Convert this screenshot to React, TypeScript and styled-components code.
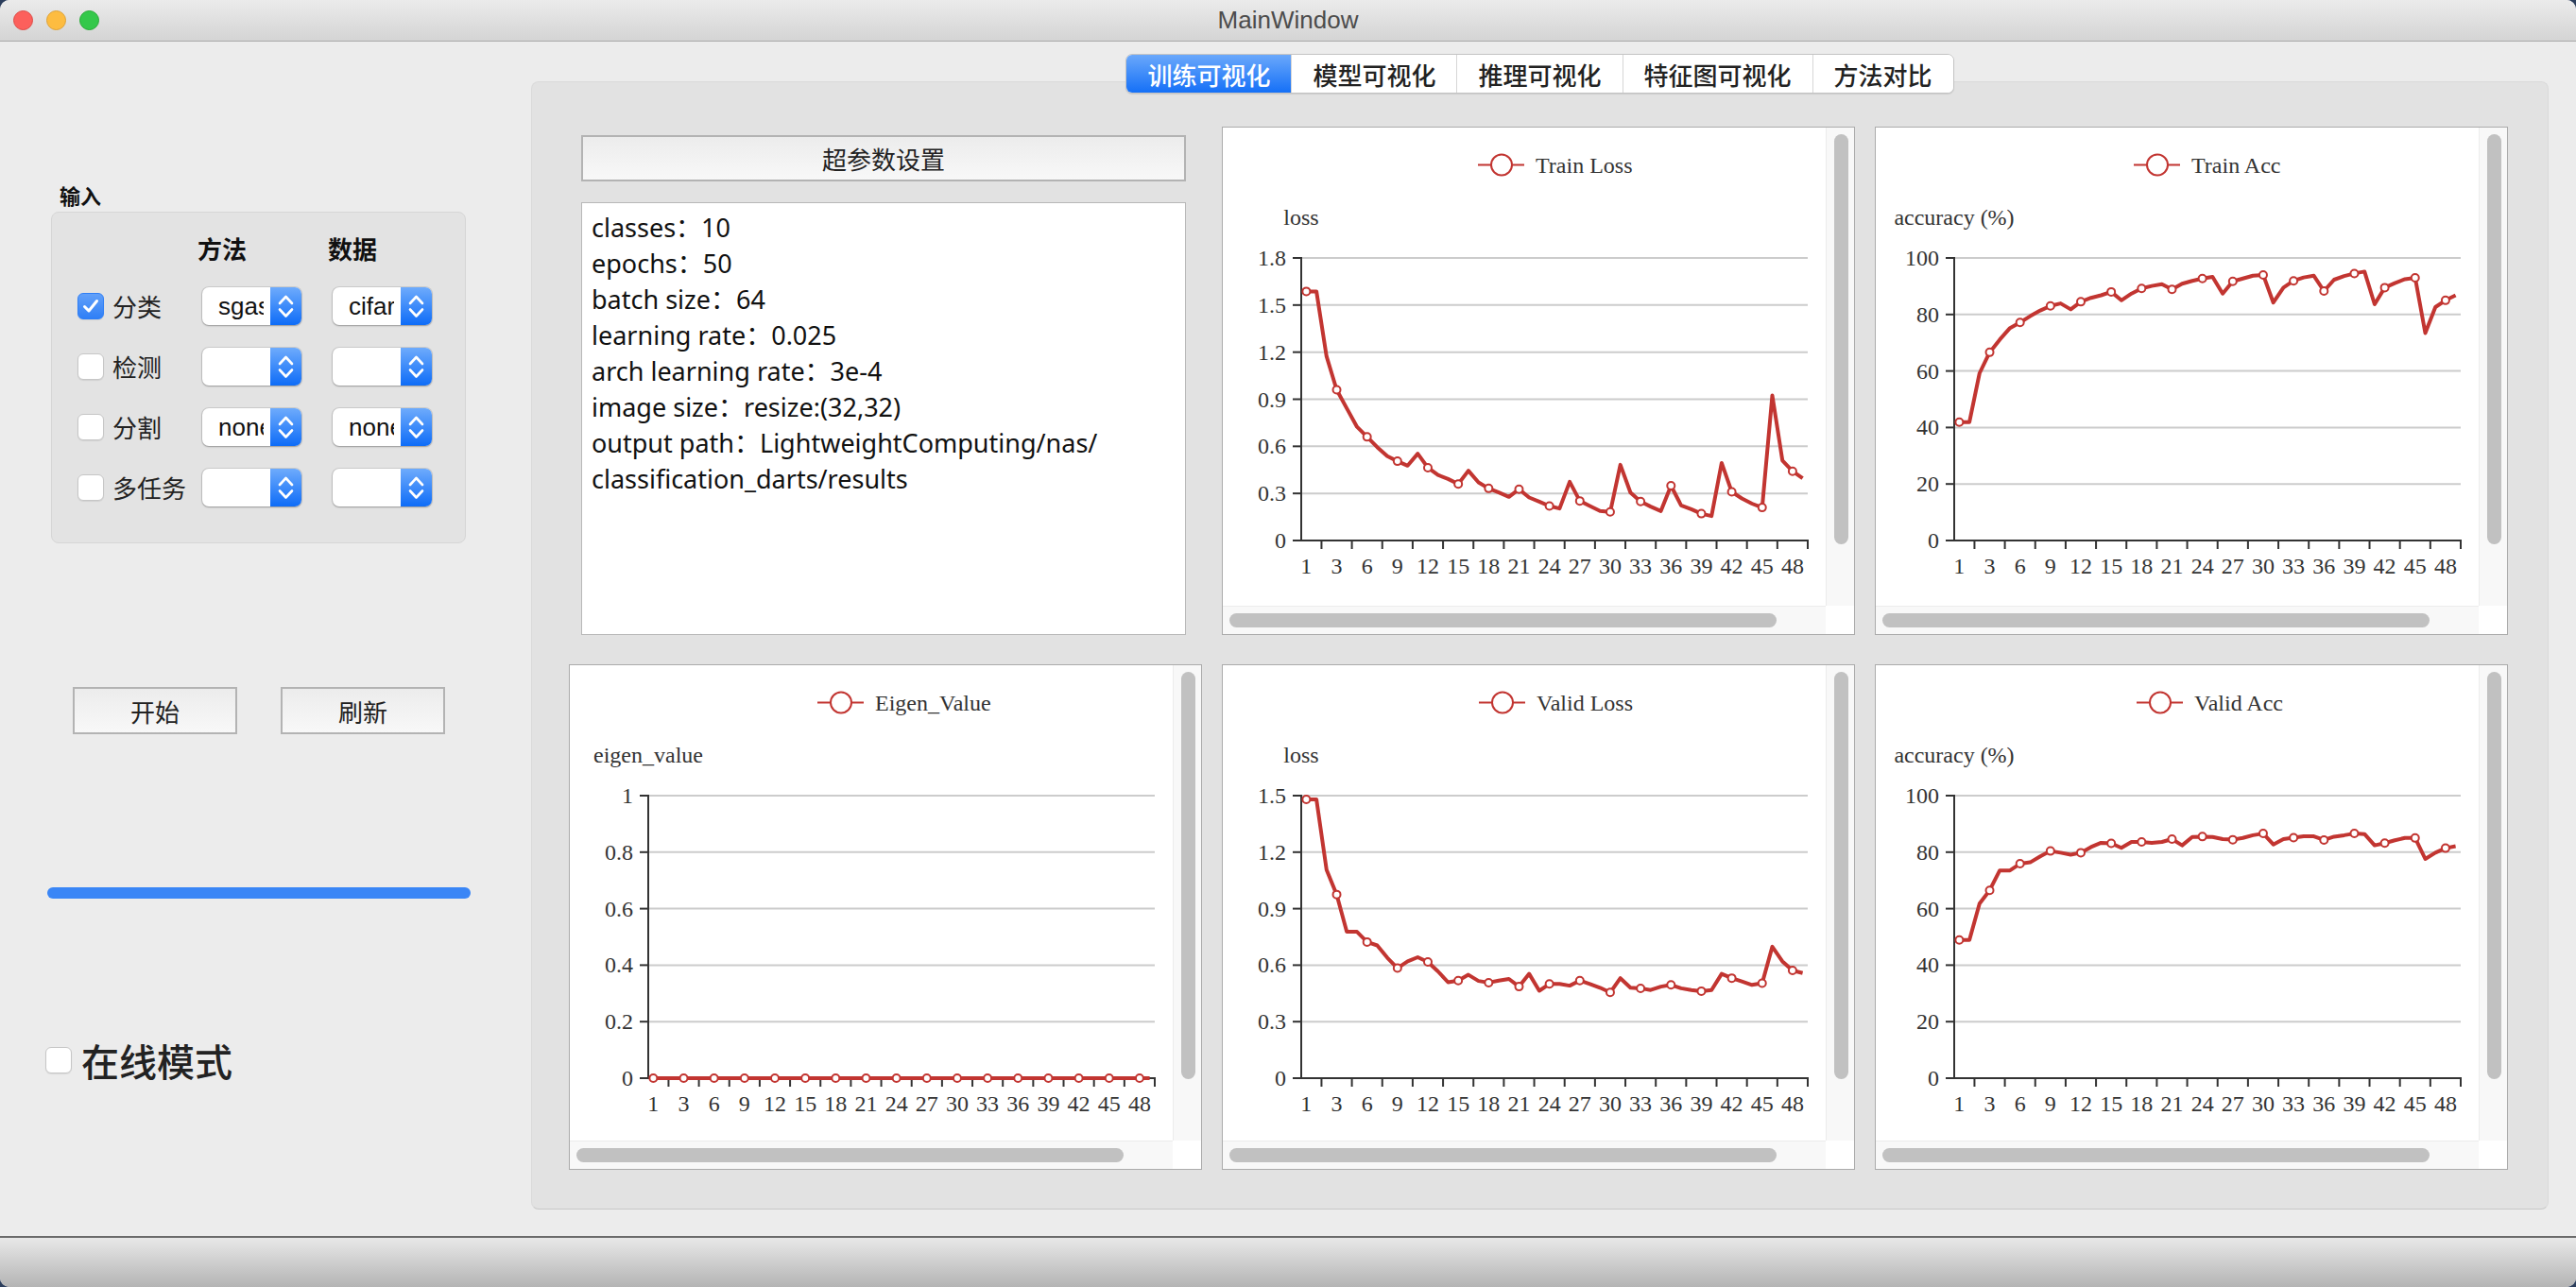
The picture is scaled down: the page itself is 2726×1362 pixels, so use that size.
import React from "react";
import styled, { createGlobalStyle } from "styled-components";

const CJK = `"Noto Sans CJK SC", "Noto Sans", sans-serif`;
const RED = "#c23531";

const GlobalStyle = createGlobalStyle`
  html, body { margin: 0; padding: 0; background: #2c3e5c; }
  body { width: 2726px; height: 1362px; overflow: hidden; font-family: ${CJK}; }
  #root { width: 2726px; height: 1362px; }
`;

const Window = styled.div`
  width: 2726px;
  height: 1362px;
  display: flex;
  flex-direction: column;
  background: #ececec;
  border-radius: 10px;
  overflow: hidden;
`;

const TitleBar = styled.div`
  height: 43px;
  flex: none;
  display: grid;
  grid-template-columns: 1fr auto 1fr;
  align-items: center;
  background: linear-gradient(#ebebeb, #d4d4d4);
  border-bottom: 1px solid #a9a9a9;
`;

const Lights = styled.div`
  display: flex;
  gap: 14px;
  padding-left: 14px;
`;

const Light = styled.span<{ $c: string; $b: string }>`
  width: 21px;
  height: 21px;
  border-radius: 50%;
  box-sizing: border-box;
  background: ${(p) => p.$c};
  border: 1px solid ${(p) => p.$b};
`;

const Title = styled.div`
  font: 26px "Liberation Sans", sans-serif;
  color: #4c4c4c;
`;

const Content = styled.div`
  flex: 1;
  display: flex;
  min-height: 0;
`;

const Sidebar = styled.div`
  width: 562px;
  flex: none;
  display: flex;
  flex-direction: column;
  align-items: flex-start;
`;

const InputLabel = styled.div`
  margin: 149px 0 5px 63px;
  font: 700 22px/26px ${CJK};
  color: #111;
`;

const GroupBox = styled.div`
  margin-left: 54px;
  width: 439px;
  height: 351px;
  box-sizing: border-box;
  background: #e3e3e3;
  border: 1px solid #d6d6d6;
  border-radius: 8px;
  padding: 21px 0 0 27px;
  display: grid;
  grid-template-columns: 132px 138px 105px;
  grid-template-rows: 34px repeat(4, 40px);
  row-gap: 24px;
  align-items: center;
`;

const ColHeader = styled.div<{ $col: number }>`
  grid-column: ${(p) => p.$col};
  margin-left: -5px;
  font: 700 26px/34px ${CJK};
  color: #111;
`;

const CheckRow = styled.label`
  display: flex;
  align-items: center;
  gap: 9px;
  font: 26px/40px ${CJK};
  color: #222;
`;

const CheckBox = styled.span<{ $checked?: boolean }>`
  width: 28px;
  height: 28px;
  box-sizing: border-box;
  border-radius: 6px;
  flex: none;
  display: flex;
  align-items: center;
  justify-content: center;
  background: ${(p) => (p.$checked ? "linear-gradient(#62a0f9, #2f7ff6)" : "#fff")};
  border: 1px solid ${(p) => (p.$checked ? "#2f7ff6" : "#c6c6c6")};
  box-shadow: 0 1px 1px rgba(0, 0, 0, 0.08);
`;

const Combo = styled.div`
  width: 105px;
  height: 40px;
  display: flex;
  border-radius: 7px;
  overflow: hidden;
  background: #fff;
  box-shadow: 0 0 0 1px rgba(0, 0, 0, 0.1), 0 1px 2px rgba(0, 0, 0, 0.25);
`;

const ComboText = styled.div`
  width: 72px;
  box-sizing: border-box;
  padding-left: 17px;
  display: flex;
  align-items: center;
`;

const ComboClip = styled.span`
  width: 48px;
  overflow: hidden;
  white-space: nowrap;
  font: 26px "Liberation Sans", sans-serif;
  color: #111;
`;

const ComboArrow = styled.div`
  width: 33px;
  background: linear-gradient(#6eabfc, #0e6cf7);
  display: flex;
`;

const ButtonRow = styled.div`
  margin: 152px 0 0 77px;
  display: flex;
  gap: 46px;
`;

const PushButton = styled.button<{ $wide?: boolean }>`
  width: ${(p) => (p.$wide ? "100%" : "174px")};
  height: ${(p) => (p.$wide ? "49px" : "50px")};
  flex: none;
  box-sizing: border-box;
  border: 2px solid #b3b3b3;
  background: linear-gradient(#ececec, #f8f8f8);
  font: 26px ${CJK};
  color: #222;
  padding: 0;
`;

const Progress = styled.div`
  margin: 162px 0 0 50px;
  width: 448px;
  height: 12px;
  border-radius: 6px;
  background: #3a86f6;
`;

const OnlineRow = styled.label`
  margin: 149px 0 0 48px;
  display: flex;
  align-items: center;
  gap: 10px;
  font: 500 40px/44px ${CJK};
  color: #222;
`;

const Main = styled.div`
  flex: 1;
  padding: 13px 29px 28px 0;
  display: flex;
  flex-direction: column;
  align-items: center;
`;

const TabBar = styled.div`
  display: flex;
  height: 40px;
  flex: none;
  margin-bottom: -13px;
  position: relative;
  z-index: 1;
  background: #fff;
  border: 1px solid #c4c4c4;
  border-radius: 7px;
  overflow: hidden;
  box-shadow: 0 1px 1px rgba(0, 0, 0, 0.1);
`;

const Tab = styled.div<{ $active?: boolean }>`
  padding: 0 22px;
  display: flex;
  align-items: center;
  font: 500 26px ${CJK};
  color: ${(p) => (p.$active ? "#fff" : "#222")};
  background: ${(p) => (p.$active ? "linear-gradient(#6aa8fb, #1570f7)" : "#fff")};
  & + & {
    border-left: 1px solid #d6d6d6;
  }
`;

const Pane = styled.div`
  align-self: stretch;
  flex: 1;
  min-height: 0;
  background: #e2e2e2;
  border: 1px solid #dadada;
  border-bottom-color: #c8c8c8;
  border-radius: 8px;
  padding: 47px 42px 43px 39px;
  display: grid;
  grid-template-columns: repeat(3, 1fr);
  grid-template-rows: 538px 535px;
  column-gap: 21px;
  row-gap: 31px;
`;

const ParamCell = styled.div`
  padding: 9px 17px 0 13px;
  display: flex;
  flex-direction: column;
  gap: 22px;
  min-width: 0;
`;

const ParamBox = styled.div`
  flex: 1;
  background: #fff;
  border: 1px solid #b8b8b8;
  padding: 7px 10px;
  font: 27px/38px "Noto Sans", ${CJK};
  color: #111;
  white-space: pre;
`;

const ChartFrame = styled.div`
  min-width: 0;
  border: 1px solid #ababab;
  background: #fff;
  display: grid;
  grid-template-columns: 1fr 30px;
  grid-template-rows: 1fr 30px;
  overflow: hidden;
`;

const Viewport = styled.div`
  overflow: hidden;
  min-width: 0;
  min-height: 0;
`;

const VTrack = styled.div`
  background: #f8f8f8;
  border-left: 1px solid #ececec;
  padding: 7px 6px 65px 8px;
  display: flex;
`;

const HTrack = styled.div`
  background: #f8f8f8;
  border-top: 1px solid #ececec;
  padding: 7px 52px 7px 7px;
  display: flex;
`;

const Thumb = styled.div`
  flex: 1;
  background: #c1c1c1;
  border-radius: 8px;
`;

const Corner = styled.div`
  background: #fff;
`;

const BottomBar = styled.div`
  height: 52px;
  flex: none;
  border-top: 2px solid #6b6b6b;
  background: linear-gradient(#e8e8e8, #b4b4b4);
`;

const AX = 83;
const GR = 619;
const GT = 138;
const GB = 437;
const XLABELS = ["1", "3", "6", "9", "12", "15", "18", "21", "24", "27", "30", "33", "36", "39", "42", "45", "48"];

type ChartProps = {
  legend: string;
  legendX: number;
  yName: string;
  yMax: number;
  yStep: number;
  data: number[];
};

function LineChart({ legend, legendX, yName, yMax, yStep, data }: ChartProps) {
  const n = 50;
  const band = (GR - AX) / n;
  const px = (i: number) => AX + (i + 0.5) * band;
  const py = (v: number) => GB - (v / yMax) * (GB - GT);
  const count = Math.round(yMax / yStep);
  const ys = Array.from({ length: count + 1 }, (_, k) => k * yStep);
  const pts = data.map((v, i) => `${px(i).toFixed(1)},${py(v).toFixed(1)}`).join(" ");
  const text = { fontFamily: '"Liberation Serif", serif', fontSize: 24, fill: "#333" };
  return (
    <ChartFrame>
      <Viewport>
        <svg width={704} height={506} style={{ display: "block" }}>
          <line x1={legendX} y1={39.5} x2={legendX + 49} y2={39.5} stroke={RED} strokeWidth={2} />
          <circle cx={legendX + 25} cy={39.5} r={11} fill="#fff" stroke={RED} strokeWidth={2} />
          <text x={legendX + 61} y={48} {...text}>{legend}</text>
          <text x={AX} y={103} textAnchor="middle" {...text}>{yName}</text>
          {ys.map((v) => (
            <g key={v}>
              {v > 0 && <line x1={AX} y1={py(v)} x2={GR} y2={py(v)} stroke="#ccc" strokeWidth={2} />}
              <line x1={AX - 9} y1={py(v)} x2={AX} y2={py(v)} stroke="#333" strokeWidth={2} />
              <text x={AX - 16} y={py(v) + 8} textAnchor="end" {...text}>
                {String(parseFloat(v.toFixed(2)))}
              </text>
            </g>
          ))}
          <line x1={AX} y1={GT - 1} x2={AX} y2={GB} stroke="#333" strokeWidth={2} />
          <line x1={AX - 1} y1={GB} x2={GR + 1} y2={GB} stroke="#333" strokeWidth={2} />
          {XLABELS.map((l, j) => (
            <g key={l}>
              <line x1={AX + (2 + j * 3) * band} y1={GB} x2={AX + (2 + j * 3) * band} y2={GB + 9} stroke="#333" strokeWidth={2} />
              <text x={px(j * 3)} y={GB + 35} textAnchor="middle" {...text}>{l}</text>
            </g>
          ))}
          <polyline points={pts} fill="none" stroke={RED} strokeWidth={4} strokeLinejoin="round" />
          {XLABELS.map((_, j) => (
            <circle key={j} cx={px(j * 3)} cy={py(data[j * 3])} r={4} fill="#fff" stroke={RED} strokeWidth={2} />
          ))}
        </svg>
      </Viewport>
      <VTrack>
        <Thumb />
      </VTrack>
      <HTrack>
        <Thumb />
      </HTrack>
      <Corner />
    </ChartFrame>
  );
}

const trainLoss = [1.587, 1.587, 1.173, 0.96, 0.842, 0.724, 0.66, 0.595, 0.537, 0.505, 0.477, 0.553, 0.464, 0.417, 0.392, 0.36, 0.445, 0.37, 0.332, 0.306, 0.278, 0.327, 0.274, 0.248, 0.22, 0.204, 0.374, 0.252, 0.22, 0.188, 0.182, 0.482, 0.306, 0.248, 0.216, 0.188, 0.349, 0.224, 0.199, 0.171, 0.156, 0.494, 0.31, 0.268, 0.235, 0.21, 0.924, 0.51, 0.441, 0.396];
const trainAcc = [41.9, 41.9, 59.2, 66.6, 71.1, 75.2, 77.2, 79.4, 81.4, 83, 83.9, 81.8, 84.5, 85.9, 86.8, 88, 85, 87.4, 89.2, 90.1, 90.7, 88.9, 90.9, 91.9, 92.7, 93.3, 87.4, 91.7, 92.7, 93.7, 94, 84.2, 89.5, 91.9, 93.1, 93.7, 88.3, 92.3, 93.6, 94.5, 95.2, 83.6, 89.5, 91.1, 92.5, 93, 73.4, 82.6, 85, 86.8];
const eigen = Array.from({ length: 50 }, () => 0);
const validLoss = [1.48, 1.48, 1.106, 0.975, 0.777, 0.777, 0.723, 0.705, 0.639, 0.584, 0.62, 0.642, 0.617, 0.567, 0.509, 0.518, 0.549, 0.516, 0.507, 0.518, 0.527, 0.486, 0.554, 0.464, 0.5, 0.5, 0.491, 0.518, 0.5, 0.48, 0.455, 0.531, 0.48, 0.477, 0.468, 0.486, 0.495, 0.477, 0.468, 0.462, 0.468, 0.554, 0.531, 0.513, 0.495, 0.504, 0.698, 0.62, 0.572, 0.558];
const validAcc = [48.9, 48.9, 61.8, 66.5, 73.5, 73.5, 75.9, 76.4, 78.5, 80.4, 79.8, 79.1, 79.8, 81.8, 83.3, 83.1, 81.5, 83.6, 83.6, 83.3, 83.6, 84.6, 82.4, 85.4, 85.5, 85.4, 84.6, 84.4, 85, 86, 86.6, 82.7, 84.6, 85.1, 85.6, 85.6, 84.3, 85.5, 86, 86.6, 86.4, 82.4, 83.2, 84.2, 85, 85, 77.6, 79.8, 81.4, 82.1];

const params = [
  "classes：10",
  "epochs：50",
  "batch size：64",
  "learning rate：0.025",
  "arch learning rate：3e-4",
  "image size：resize:(32,32)",
  "output path：LightweightComputing/nas/",
  "classification_darts/results",
].join("\n");

const tasks = [
  { name: "分类", checked: true, method: "sgas", data: "cifar10" },
  { name: "检测", checked: false, method: "", data: "" },
  { name: "分割", checked: false, method: "none", data: "none" },
  { name: "多任务", checked: false, method: "", data: "" },
];

const tabs = ["训练可视化", "模型可视化", "推理可视化", "特征图可视化", "方法对比"];

function Check() {
  return (
    <svg width="18" height="18" viewBox="0 0 18 18">
      <path d="M2.5 9.5 L7 14 L15.5 3.5" fill="none" stroke="#fff" strokeWidth="3" strokeLinecap="round" strokeLinejoin="round" />
    </svg>
  );
}

function Chevrons() {
  return (
    <svg width="33" height="40" viewBox="0 0 33 40">
      <path d="M10 17 L16.5 10 L23 17" fill="none" stroke="#fff" strokeWidth="2.6" strokeLinecap="round" strokeLinejoin="round" />
      <path d="M10 23.5 L16.5 30.5 L23 23.5" fill="none" stroke="#fff" strokeWidth="2.6" strokeLinecap="round" strokeLinejoin="round" />
    </svg>
  );
}

function ComboBox({ value }: { value: string }) {
  return (
    <Combo>
      <ComboText>
        <ComboClip>{value}</ComboClip>
      </ComboText>
      <ComboArrow>
        <Chevrons />
      </ComboArrow>
    </Combo>
  );
}

export default function App() {
  return (
    <>
      <GlobalStyle />
      <Window>
        <TitleBar>
          <Lights>
            <Light $c="#fc605c" $b="#de4a45" />
            <Light $c="#fdbc40" $b="#dea236" />
            <Light $c="#34c84a" $b="#27aa35" />
          </Lights>
          <Title>MainWindow</Title>
          <div />
        </TitleBar>
        <Content>
          <Sidebar>
            <InputLabel>输入</InputLabel>
            <GroupBox>
              <ColHeader $col={2}>方法</ColHeader>
              <ColHeader $col={3}>数据</ColHeader>
              {tasks.map((t) => (
                <React.Fragment key={t.name}>
                  <CheckRow>
                    <CheckBox $checked={t.checked}>{t.checked && <Check />}</CheckBox>
                    {t.name}
                  </CheckRow>
                  <ComboBox value={t.method} />
                  <ComboBox value={t.data} />
                </React.Fragment>
              ))}
            </GroupBox>
            <ButtonRow>
              <PushButton>开始</PushButton>
              <PushButton>刷新</PushButton>
            </ButtonRow>
            <Progress />
            <OnlineRow>
              <CheckBox />
              在线模式
            </OnlineRow>
          </Sidebar>
          <Main>
            <TabBar>
              {tabs.map((t, i) => (
                <Tab key={t} $active={i === 0}>{t}</Tab>
              ))}
            </TabBar>
            <Pane>
              <ParamCell>
                <PushButton $wide>超参数设置</PushButton>
                <ParamBox>{params}</ParamBox>
              </ParamCell>
              <LineChart legend="Train Loss" legendX={270} yName="loss" yMax={1.8} yStep={0.3} data={trainLoss} />
              <LineChart legend="Train Acc" legendX={273} yName="accuracy (%)" yMax={100} yStep={20} data={trainAcc} />
              <LineChart legend="Eigen_Value" legendX={262} yName="eigen_value" yMax={1} yStep={0.2} data={eigen} />
              <LineChart legend="Valid Loss" legendX={271} yName="loss" yMax={1.5} yStep={0.3} data={validLoss} />
              <LineChart legend="Valid Acc" legendX={276} yName="accuracy (%)" yMax={100} yStep={20} data={validAcc} />
            </Pane>
          </Main>
        </Content>
        <BottomBar />
      </Window>
    </>
  );
}
